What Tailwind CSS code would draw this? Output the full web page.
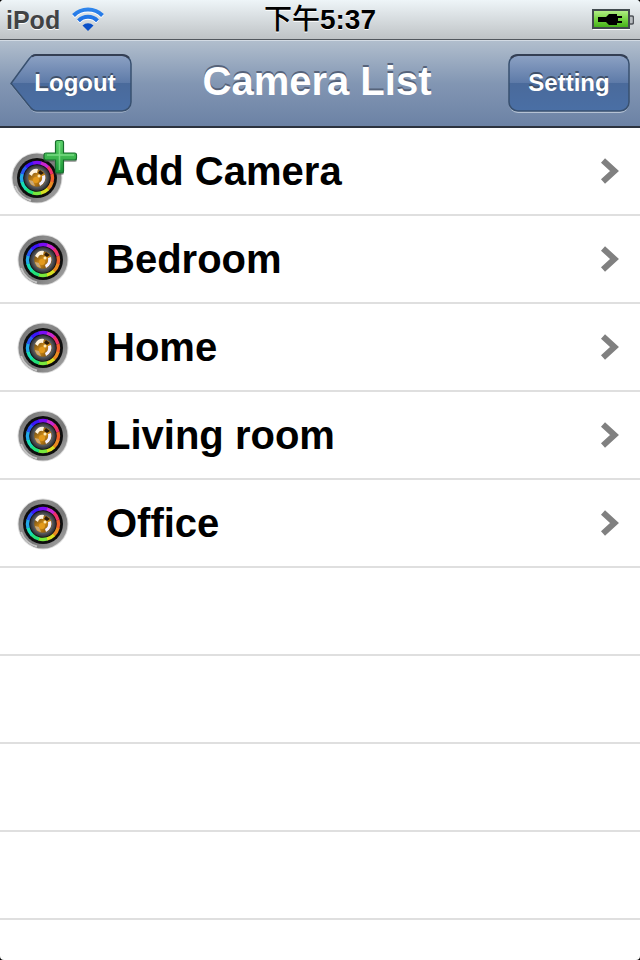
<!DOCTYPE html>
<html lang="en">
<head>
<meta charset="utf-8">
<meta name="viewport" content="width=device-width, initial-scale=1">
<title>Camera List</title>
<script src="https://cdn.jsdelivr.net/npm/@tailwindcss/browser@4"></script>
</head>
<body class="bg-black font-['Liberation_Sans','Noto_Sans_CJK_TC',sans-serif]">
<svg class="absolute size-0" aria-hidden="true">
  <defs>
    <linearGradient id="rim" x1="0" y1="0" x2="1" y2="1"><stop offset="0" stop-color="#666"/><stop offset=".3" stop-color="#8c8c8c"/><stop offset=".6" stop-color="#777"/><stop offset="1" stop-color="#b0b0b0"/></linearGradient>
    <radialGradient id="inner"><stop offset="0" stop-color="#666"/><stop offset=".7" stop-color="#5c5f63"/><stop offset="1" stop-color="#2c2c30"/></radialGradient>
    <linearGradient id="amber" x1="0" y1="0" x2="1" y2="1"><stop offset="0" stop-color="#4a3614"/><stop offset=".5" stop-color="#d89018"/><stop offset="1" stop-color="#5a3808"/></linearGradient>
    <linearGradient id="plusfill" x1="0" y1="0" x2="0" y2="1"><stop offset="0" stop-color="#5ad06a"/><stop offset=".5" stop-color="#3fb850"/><stop offset="1" stop-color="#159236"/></linearGradient>
    <linearGradient id="cell" x1="0" y1="0" x2="0" y2="1"><stop offset="0" stop-color="#b8f08c"/><stop offset=".5" stop-color="#78d444"/><stop offset="1" stop-color="#3fae14"/></linearGradient>
    <linearGradient id="wave" gradientUnits="userSpaceOnUse" x1="0" y1="2" x2="0" y2="26"><stop offset="0" stop-color="#2f86ec"/><stop offset=".5" stop-color="#1f72e4"/><stop offset="1" stop-color="#0847c0"/></linearGradient>
    <linearGradient id="key" x1="0" y1="0" x2="0" y2="1"><stop offset="0" stop-color="#8da2c4"/><stop offset=".5" stop-color="#5d7aa8"/><stop offset=".5" stop-color="#4a6a9b"/><stop offset="1" stop-color="#4a6fa5"/></linearGradient>
    <filter id="soft" x="-20%" y="-20%" width="140%" height="140%"><feGaussianBlur stdDeviation=".7"/></filter>
  </defs>
  <symbol id="lens" viewBox="0 0 52 52">
    <circle cx="26" cy="26" r="25.500" fill="#ddd"/>
    <circle cx="26" cy="26" r="24.500" fill="url(#rim)"/>
    <path d="M4 34a23.500 23.500 0 0 0 16 14.500" fill="none" stroke="#c4c4c4" stroke-width="2" filter="url(#soft)"/>
    <circle cx="26" cy="26" r="20" fill="#111" filter="url(#soft)"/>
    <g fill="none" stroke-width="3.400" filter="url(#soft)">
      <circle cx="26" cy="26" r="15.500" pathLength="360" stroke="#f0602c" stroke-dasharray="32 328" transform="rotate(-15 26 26)"/>
      <circle cx="26" cy="26" r="15.500" pathLength="360" stroke="#e88a20" stroke-dasharray="32 328" transform="rotate(15 26 26)"/>
      <circle cx="26" cy="26" r="15.500" pathLength="360" stroke="#d8e020" stroke-dasharray="32 328" transform="rotate(45 26 26)"/>
      <circle cx="26" cy="26" r="15.500" pathLength="360" stroke="#78e83c" stroke-dasharray="32 328" transform="rotate(75 26 26)"/>
      <circle cx="26" cy="26" r="15.500" pathLength="360" stroke="#20e078" stroke-dasharray="32 328" transform="rotate(105 26 26)"/>
      <circle cx="26" cy="26" r="15.500" pathLength="360" stroke="#18dcb4" stroke-dasharray="32 328" transform="rotate(135 26 26)"/>
      <circle cx="26" cy="26" r="15.500" pathLength="360" stroke="#20a8e8" stroke-dasharray="32 328" transform="rotate(165 26 26)"/>
      <circle cx="26" cy="26" r="15.500" pathLength="360" stroke="#2858f0" stroke-dasharray="32 328" transform="rotate(195 26 26)"/>
      <circle cx="26" cy="26" r="15.500" pathLength="360" stroke="#3a14f8" stroke-dasharray="32 328" transform="rotate(225 26 26)"/>
      <circle cx="26" cy="26" r="15.500" pathLength="360" stroke="#7a10f4" stroke-dasharray="32 328" transform="rotate(255 26 26)"/>
      <circle cx="26" cy="26" r="15.500" pathLength="360" stroke="#c828d0" stroke-dasharray="32 328" transform="rotate(285 26 26)"/>
      <circle cx="26" cy="26" r="15.500" pathLength="360" stroke="#ec3068" stroke-dasharray="30 330" transform="rotate(315 26 26)"/>
    </g>
    <circle cx="26" cy="26" r="13" fill="url(#inner)"/>
    <circle cx="26" cy="26" r="8.800" fill="url(#amber)"/>
    <path d="M18 22q3-6 9-5l-1 4q-4-1-5 3z" fill="#fff3dc"/>
    <path d="M34 23q2 7-5 11l-1-3q4-2 3-7z" fill="#f4f0ff"/>
    <path d="M18 28l4 1 2 5q-5-1-6-6z" fill="#c8a878"/>
    <path d="M29 18l4 3-3 2-3-2z" fill="#2c1c0c"/>
    <circle cx="25" cy="28" r="3" fill="#e49a1c"/>
    <circle cx="28" cy="24" r="1.500" fill="#ffe9b0"/>
  </symbol>
  <symbol id="chevron" viewBox="0 0 20 28"><path d="M3 3.500 14.500 14 3 24.500" fill="none" stroke="#808080" stroke-width="6"/></symbol>
</svg>

<div class="flex min-h-screen flex-col overflow-hidden rounded-sm bg-white">
  <header>
    <div class="grid h-10 grid-cols-3 items-center border-b border-[#53585e] bg-linear-to-b from-[#eef5f8] to-[#bfc3c6] px-1.5">
      <div class="flex items-center gap-3">
        <span class="text-[25px] leading-8 font-bold text-[#414345] [text-shadow:0_1px_0_#fff]">iPod</span>
        <svg class="h-7 w-8" viewBox="0 0 32 28" role="img" aria-label="Wi-Fi">
          <g transform="translate(0 1)" fill="none" stroke="#fff" stroke-width="4"><path d="M1.500 9.500a20.500 20.500 0 0 1 29 0M6.500 14.800a13.400 13.400 0 0 1 19 0"/></g>
          <g fill="none" stroke="url(#wave)" stroke-width="4">
            <path d="M1.500 9.500a20.500 20.500 0 0 1 29 0"/>
            <path d="M6.500 14.800a13.400 13.400 0 0 1 19 0"/>
          </g>
          <path d="M10.500 19.500a7.800 7.800 0 0 1 11 0L16 25z" fill="#0a50c8"/>
        </svg>
      </div>
      <time class="text-center text-[28px] leading-8 font-medium whitespace-nowrap text-black [text-shadow:0_1px_0_#fff]" datetime="17:37">下午<b>5:37</b></time>
      <svg class="h-6 w-[42px] justify-self-end" viewBox="0 0 42 24" role="img" aria-label="Battery charging">
        <path d="M37 8h3q1.500 0 1.500 2v4q0 2-1.500 2h-3" fill="#b8bcc0" stroke="#50545a" stroke-width="1.500"/>
        <rect x="1" y="2" width="37" height="20" fill="#fff"/>
        <rect x="1" y="2" width="36" height="18" fill="url(#cell)" stroke="#414a4e" stroke-width="2"/>
        <path d="M6 9h8l3-3h8v2h5v2h-4v3h4v2h-5v2h-8l-3-3H6z" fill="#000"/>
      </svg>
    </div>
    <nav class="relative flex h-22 items-center justify-between border-t border-b-2 border-t-[#d3dbe4] border-b-[#2c323e] bg-linear-to-b from-[#b1becd] via-[#8296b3] to-[#6c82a5] px-2.5">
      <button type="button" class="relative h-[60px] w-[122px] pb-0.5 pl-2 text-2xl font-bold text-white [text-shadow:0_-2px_0_#3f5069]">
        <svg class="absolute inset-0 size-full" viewBox="0 0 122 60" aria-hidden="true">
          <path transform="translate(0 1)" d="M24 1.500H112a9 9 0 0 1 9 9V48.500a9 9 0 0 1-9 9H27q-4 0-7-4L1 30 18 5q3-3.500 6-3.500z" fill="#b5c2d4"/>
          <path d="M25 1H112a9 9 0 0 1 9 9V48a9 9 0 0 1-9 9H27q-4 0-7-4L1 29.500 19 5q3-4 6-4z" fill="url(#key)" stroke="#38506f" stroke-width="1.500"/>
          <path d="M22 2.500q2-1.500 4-1.500H112q4 0 7 3" fill="none" stroke="#343f54" stroke-width="2"/>
        </svg>
        <span class="relative">Logout</span>
      </button>
      <h1 class="pointer-events-none absolute inset-x-0 pr-1.5 pb-1.5 text-center text-[40px] leading-12 font-bold text-white [text-shadow:0_-2px_0_#56637a]">Camera List</h1>
      <button type="button" class="relative h-[60px] w-[122px] pb-0.5 text-2xl font-bold text-white [text-shadow:0_-2px_0_#3f5069]">
        <svg class="absolute inset-0 size-full" viewBox="0 0 122 60" aria-hidden="true">
          <rect x="1" y="3" width="120" height="56" rx="9" fill="#b5c2d4"/>
          <rect x="1" y="1" width="120" height="56" rx="9" fill="url(#key)" stroke="#38506f" stroke-width="1.500"/>
          <path d="M3 4q3-3 7-3H112q4 0 7 3" fill="none" stroke="#343f54" stroke-width="2"/>
        </svg>
        <span class="relative">Setting</span>
      </button>
    </nav>
  </header>

  <main class="flex-1">
    <ul class="text-[40px] leading-12 font-bold text-black">
      <li class="h-22 border-b-2 border-[#dfdfdf]">
        <a href="#add" class="flex h-full items-center pr-5">
          <span class="w-[106px] shrink-0 pt-0.5 pl-2.5">
            <svg class="h-[66px] w-[68px]" viewBox="0 0 68 66" aria-hidden="true">
              <use href="#lens" x="1" y="13" width="52" height="52"/>
              <path d="M47 1.500h5q2 0 2 2V14h11q2 0 2 2v4q0 2-2 2H54V33q0 2-2 2h-5q-2 0-2-2V22H36q-2 0-2-2v-4q0-2 2-2h9V3.500q0-2 2-2z" transform="translate(0 1)" fill="#555" opacity=".5" filter="url(#soft)"/>
              <path d="M47.500 1.500h4q2 0 2 2V14h11q2 0 2 2v3q0 2-2 2h-11V32q0 2-2 2h-4q-2 0-2-2V21H36q-2 0-2-2v-3q0-2 2-2h9.500V3.500q0-2 2-2z" fill="url(#plusfill)" stroke="#176e2c" stroke-width="1.200"/>
              <path d="M49.500 4V31M37 16H64" stroke="#8ee896" stroke-width="1.500" opacity=".7"/>
            </svg>
          </span>
          <span class="flex-1">Add Camera</span>
          <svg class="h-7 w-5" aria-hidden="true"><use href="#chevron"/></svg>
        </a>
      </li>
      <li class="h-22 border-b-2 border-[#dfdfdf]">
        <a href="#bedroom" class="flex h-full items-center pr-5">
          <span class="w-[106px] shrink-0 pt-0.5 pl-[17px]"><svg class="size-[52px]" aria-hidden="true"><use href="#lens"/></svg></span>
          <span class="flex-1">Bedroom</span>
          <svg class="h-7 w-5" aria-hidden="true"><use href="#chevron"/></svg>
        </a>
      </li>
      <li class="h-22 border-b-2 border-[#dfdfdf]">
        <a href="#home" class="flex h-full items-center pr-5">
          <span class="w-[106px] shrink-0 pt-0.5 pl-[17px]"><svg class="size-[52px]" aria-hidden="true"><use href="#lens"/></svg></span>
          <span class="flex-1">Home</span>
          <svg class="h-7 w-5" aria-hidden="true"><use href="#chevron"/></svg>
        </a>
      </li>
      <li class="h-22 border-b-2 border-[#dfdfdf]">
        <a href="#living-room" class="flex h-full items-center pr-5">
          <span class="w-[106px] shrink-0 pt-0.5 pl-[17px]"><svg class="size-[52px]" aria-hidden="true"><use href="#lens"/></svg></span>
          <span class="flex-1">Living room</span>
          <svg class="h-7 w-5" aria-hidden="true"><use href="#chevron"/></svg>
        </a>
      </li>
      <li class="h-22 border-b-2 border-[#dfdfdf]">
        <a href="#office" class="flex h-full items-center pr-5">
          <span class="w-[106px] shrink-0 pt-0.5 pl-[17px]"><svg class="size-[52px]" aria-hidden="true"><use href="#lens"/></svg></span>
          <span class="flex-1">Office</span>
          <svg class="h-7 w-5" aria-hidden="true"><use href="#chevron"/></svg>
        </a>
      </li>
    </ul>
    <div aria-hidden="true">
      <div class="h-22 border-b-2 border-[#dfdfdf]"></div>
      <div class="h-22 border-b-2 border-[#dfdfdf]"></div>
      <div class="h-22 border-b-2 border-[#dfdfdf]"></div>
      <div class="h-22 border-b-2 border-[#dfdfdf]"></div>
    </div>
  </main>
</div>
</body>
</html>
